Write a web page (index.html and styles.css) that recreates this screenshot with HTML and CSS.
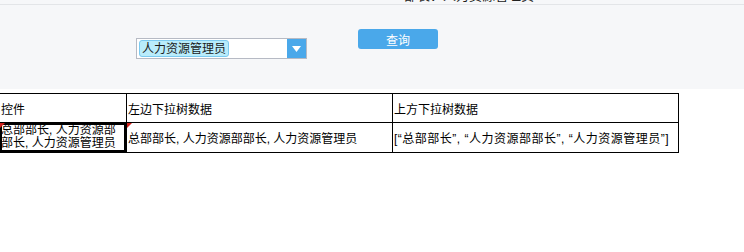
FILE: index.html
```html
<!DOCTYPE html>
<html lang="zh-CN">
<head>
    <meta charset="UTF-8">
    <title>下拉树控件</title>
    <link rel="stylesheet" href="styles.css">
</head>
<body>
    <div class="panel">
        <div class="panel-top">
            <span class="clipped">部长：人力资源管理员</span>
        </div>
        <div class="panel-body">
            <div class="combo">
                <div class="combo-input">
                    <span class="tag">人力资源管理员</span>
                </div>
                <div class="combo-btn">
                    <svg width="9" height="6" viewBox="0 0 9 6"><path d="M0 0H9L4.5 6Z" fill="#fff"/></svg>
                </div>
            </div>
            <button class="query">查询</button>
        </div>
    </div>

    <table class="grid">
        <colgroup>
            <col class="c1">
            <col class="c2">
            <col class="c3">
        </colgroup>
        <tr class="head">
            <td>控件</td>
            <td>左边下拉树数据</td>
            <td>上方下拉树数据</td>
        </tr>
        <tr class="data">
            <td class="selected mark"><div class="wrap">总部部长, 人力资源部部长, 人力资源管理员</div></td>
            <td class="mark">总部部长, 人力资源部部长, 人力资源管理员</td>
            <td class="json">[“总部部长”, “人力资源部部长”, “人力资源管理员”]</td>
        </tr>
    </table>
</body>
</html>
```

FILE: styles.css
```css
body {
    margin: 0;
    font-family: "Liberation Sans", "Noto Sans CJK SC", sans-serif;
    font-size: 12px;
    color: #000;
    background: #fff;
}
.panel {
    height: 89px;
    background: #f6f7f9;
}
.panel-top {
    height: 4px;
    overflow: hidden;
    border-bottom: 1px solid #e3e5e8;
    position: relative;
}
.clipped {
    position: absolute;
    left: 404px;
    top: -11px;
    font-size: 13px;
    line-height: 14px;
    color: #222;
}
.panel-body {
    display: flex;
    align-items: flex-start;
    padding-left: 136px;
}
.combo {
    display: flex;
    margin-top: 33px;
    width: 171px;
    height: 21px;
    box-sizing: border-box;
    border: 1px solid #b6bac4;
    background: #fff;
}
.combo-input {
    flex: 1;
    padding: 1px 2px;
}
.tag {
    display: inline-block;
    height: 17px;
    line-height: 16px;
    padding: 0 2px;
    box-sizing: border-box;
    background: #b9ecfb;
    border: 1px solid #7ccaf0;
    border-radius: 3px;
    font-size: 12px;
    color: #1a1a1a;
}
.combo-btn {
    width: 19px;
    background: #4aa8ea;
    display: flex;
    align-items: center;
    justify-content: center;
}
.query {
    margin-left: 51px;
    margin-top: 24px;
    width: 80px;
    height: 20px;
    padding: 0;
    border: none;
    border-radius: 3px;
    background: #4aa8ea;
    color: #fff;
    font-family: "Liberation Sans", "Noto Sans CJK SC", sans-serif;
    font-size: 12px;
}
.grid {
    margin-top: 4px;
    margin-left: -1px;
    border-collapse: collapse;
    table-layout: fixed;
    width: 679px;
}
.grid col.c1 {
    width: 127px;
}
.grid col.c2 {
    width: 266px;
}
.grid col.c3 {
    width: 286px;
}
.grid td {
    border: 1px solid #000;
    padding: 0 1px;
    vertical-align: middle;
    white-space: nowrap;
    font-size: 12px;
}
.grid .head td {
    height: 28px;
}
.grid .data td {
    height: 29px;
}
.grid td.json {
    letter-spacing: 0.5px;
}
.grid td.mark {
    position: relative;
}
.grid td.mark::before {
    content: "";
    position: absolute;
    left: 0;
    top: 0;
    border-top: 5px solid #d0201b;
    border-right: 5px solid transparent;
}
.grid td.selected {
    padding: 0;
    box-shadow: inset 0 0 0 2px #000;
}
.grid .wrap {
    white-space: normal;
    word-break: break-all;
    line-height: 13px;
    padding-left: 1px;
    overflow: hidden;
    height: 28px;
}
```
